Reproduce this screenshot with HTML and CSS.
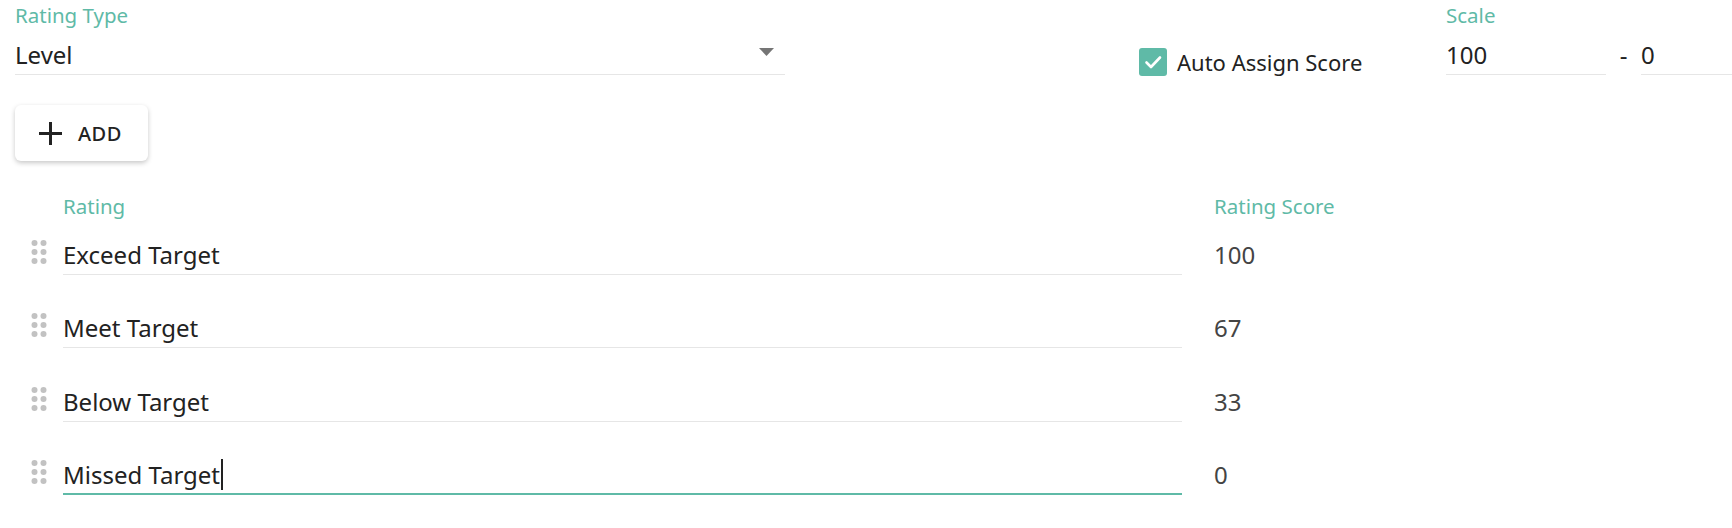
FILE: index.html
```html
<!DOCTYPE html>
<html lang="en">
<head>
<meta charset="UTF-8">
<meta name="viewport" content="width=device-width, initial-scale=1.0">
<title>Rating Settings</title>
<link rel="stylesheet" href="styles.css">
</head>
<body>
<div class="top">
  <div class="type-group">
    <div class="label">Rating Type</div>
    <div class="field select">
      <span>Level</span>
      <svg class="arrow" width="15" height="8" viewBox="0 0 15 8"><path d="M0 0h15L7.5 8z" fill="#757575"/></svg>
    </div>
  </div>

  <div class="auto">
    <span class="checkbox">
      <svg width="28" height="28" viewBox="0 0 28 28"><path d="M7.5 14.5l4.5 4.5 9-9.5" fill="none" stroke="#fff" stroke-width="2.6" stroke-linecap="round" stroke-linejoin="round"/></svg>
    </span>
    <span class="auto-text">Auto Assign Score</span>
  </div>

  <div class="scale">
    <div class="label">Scale</div>
    <div class="scale-row">
      <div class="field scale-input">100</div>
      <div class="dash">-</div>
      <div class="field scale-input last">0</div>
    </div>
  </div>
</div>

<button class="add-btn">
  <svg width="25" height="25" viewBox="0 0 25 25"><path d="M12.5 1v23M1 12.5h23" stroke="#222" stroke-width="3"/></svg>
  <span>ADD</span>
</button>

<div class="list">
  <div class="list-head">
    <div class="label rating-col">Rating</div>
    <div class="label">Rating Score</div>
  </div>

  <div class="row">
    <svg class="handle" width="36" height="36" viewBox="0 0 24 24"><g fill="#c2c2c2"><circle cx="9" cy="6" r="2"/><circle cx="15" cy="6" r="2"/><circle cx="9" cy="12" r="2"/><circle cx="15" cy="12" r="2"/><circle cx="9" cy="18" r="2"/><circle cx="15" cy="18" r="2"/></g></svg>
    <div class="field rating-col">Exceed Target</div>
    <div class="score">100</div>
  </div>

  <div class="row">
    <svg class="handle" width="36" height="36" viewBox="0 0 24 24"><g fill="#c2c2c2"><circle cx="9" cy="6" r="2"/><circle cx="15" cy="6" r="2"/><circle cx="9" cy="12" r="2"/><circle cx="15" cy="12" r="2"/><circle cx="9" cy="18" r="2"/><circle cx="15" cy="18" r="2"/></g></svg>
    <div class="field rating-col">Meet Target</div>
    <div class="score">67</div>
  </div>

  <div class="row">
    <svg class="handle" width="36" height="36" viewBox="0 0 24 24"><g fill="#c2c2c2"><circle cx="9" cy="6" r="2"/><circle cx="15" cy="6" r="2"/><circle cx="9" cy="12" r="2"/><circle cx="15" cy="12" r="2"/><circle cx="9" cy="18" r="2"/><circle cx="15" cy="18" r="2"/></g></svg>
    <div class="field rating-col">Below Target</div>
    <div class="score">33</div>
  </div>

  <div class="row">
    <svg class="handle" width="36" height="36" viewBox="0 0 24 24"><g fill="#c2c2c2"><circle cx="9" cy="6" r="2"/><circle cx="15" cy="6" r="2"/><circle cx="9" cy="12" r="2"/><circle cx="15" cy="12" r="2"/><circle cx="9" cy="18" r="2"/><circle cx="15" cy="18" r="2"/></g></svg>
    <div class="field rating-col focused">Missed Target<span class="caret"></span></div>
    <div class="score">0</div>
  </div>
</div>
</body>
</html>
```

FILE: styles.css
```css
body, html {
  margin: 0;
  padding: 0;
  overflow: hidden;
  background: #fff;
}
body {
  padding: 3px 0 0 15px;
  font-family: "Noto Sans", sans-serif;
  color: #222;
}
.label {
  font-size: 20.5px;
  line-height: 24px;
  color: #5fbaa7;
  margin-bottom: 12px;
}
.field {
  font-size: 24px;
  line-height: 32px;
  padding-bottom: 3px;
  border-bottom: 1px solid #e6e6e6;
  color: #222;
  white-space: nowrap;
}
.top {
  display: flex;
}
.type-group {
  width: 770px;
}
.select {
  display: flex;
  justify-content: space-between;
}
.arrow {
  margin-top: 9px;
  margin-right: 11px;
}
.auto {
  width: 307px;
  margin-left: 354px;
  margin-top: 45px;
  height: 28px;
  display: flex;
  align-items: center;
  gap: 10px;
  font-size: 22px;
  line-height: 28px;
}
.checkbox {
  width: 28px;
  height: 28px;
  border-radius: 3px;
  background-color: #5fbaa7;
  display: block;
}
.checkbox svg {
  display: block;
}
.scale {
  flex: 1;
}
.scale-row {
  display: flex;
}
.scale-input {
  width: 160px;
}
.scale-input.last {
  flex: 1;
  width: auto;
}
.dash {
  width: 35px;
  text-align: center;
  font-size: 24px;
  line-height: 32px;
}
.add-btn {
  margin-top: 29px;
  height: 56px;
  display: flex;
  align-items: center;
  gap: 15px;
  padding: 0 26px 0 23px;
  border: none;
  border-radius: 6px;
  background-color: #fff;
  box-shadow: 0 2px 5px rgba(0, 0, 0, 0.22);
  font-family: "Noto Sans", sans-serif;
  font-size: 20px;
  font-weight: 500;
  letter-spacing: 0.5px;
  color: #222;
}
.add-btn svg {
  display: block;
}
.list {
  margin-top: 33px;
}
.list-head {
  display: flex;
  padding-left: 48px;
  margin-bottom: 21px;
}
.list-head .label {
  margin-bottom: 0;
}
.rating-col {
  width: 1119px;
  margin-right: 32px;
  flex: none;
}
.row {
  display: flex;
  align-items: flex-start;
  margin-bottom: 37.33px;
}
.handle {
  flex: none;
  margin: -5px 6px 0 6px;
}
.score {
  font-size: 24px;
  line-height: 32px;
  color: #444;
}
.focused {
  padding-bottom: 2px;
  border-bottom: 2px solid #5fbaa7;
}
.caret {
  display: inline-block;
  width: 2px;
  height: 31px;
  margin-left: 1px;
  vertical-align: top;
  background-color: #222;
}
```
